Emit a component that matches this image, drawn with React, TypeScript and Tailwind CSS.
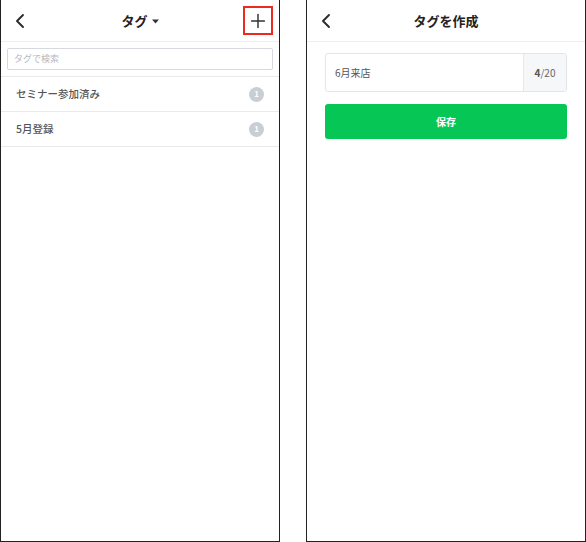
import React from "react";
import { ChevronLeft, Plus } from "lucide-react";

const font = { fontFamily: '"Noto Sans CJK JP", "Noto Sans", sans-serif' };

function Caret() {
  return (
    <svg width="7" height="5" viewBox="0 0 7 5" className="ml-[4px] mt-[1px]">
      <path d="M0 0.5h7L3.5 4.5z" fill="#333" />
    </svg>
  );
}

function Badge() {
  return (
    <div className="w-[15px] h-[15px] rounded-full bg-[#c9cdd4] flex items-center justify-center text-white text-[8px] font-bold leading-none">
      1
    </div>
  );
}

function LeftPanel() {
  const rows = ["セミナー参加済み", "5月登録"];
  return (
    <div className="w-[280px] h-[542px] border-x border-b border-[#222] bg-white flex flex-col">
      <div className="h-[42px] border-b border-[#eceef1] grid grid-cols-[1fr_auto_1fr] items-center">
        <div className="pl-[7px] flex items-center">
          <ChevronLeft size={24} strokeWidth={1.9} color="#2b2b2b" />
        </div>
        <div className="flex items-center text-[13px] font-bold text-[#222] leading-none">
          タグ
          <Caret />
        </div>
        <div className="flex justify-end pr-[6px]">
          <div className="w-[30px] h-[29px] border-2 border-[#ec2b20] flex items-center justify-center">
            <Plus size={22} strokeWidth={1.6} color="#333" />
          </div>
        </div>
      </div>
      <div className="pt-[6px] pb-[6px] px-[6px] border-b border-[#e8eaee]">
        <div className="h-[22px] border border-[#d6dae0] rounded-[2px] flex items-center px-[6px] text-[9px] text-[#b4b9c1]">
          タグで検索
        </div>
      </div>
      {rows.map((r) => (
        <div
          key={r}
          className="h-[35px] border-b border-[#e8eaee] flex items-center justify-between pl-[15px] pr-[15px]"
        >
          <span className="text-[10.5px] font-medium text-[#555]">{r}</span>
          <Badge />
        </div>
      ))}
    </div>
  );
}

function RightPanel() {
  return (
    <div className="w-[280px] h-[542px] border-x border-b border-[#222] bg-white flex flex-col">
      <div className="h-[42px] border-b border-[#eceef1] grid grid-cols-[1fr_auto_1fr] items-center">
        <div className="pl-[7px] flex items-center">
          <ChevronLeft size={24} strokeWidth={1.9} color="#2b2b2b" />
        </div>
        <div className="text-[13px] font-bold text-[#222] leading-none">タグを作成</div>
        <div />
      </div>
      <div className="px-[18px] pt-[11px] flex flex-col gap-[12px]">
        <div className="h-[39px] border border-[#e2e5ea] rounded-[3px] flex overflow-hidden">
          <div className="flex-1 flex items-center pl-[9px] text-[10px] text-[#555]">6月来店</div>
          <div className="w-[43px] bg-[#f6f7f9] border-l border-[#e6e8ec] flex items-center justify-center text-[10px] text-[#666]">
            <span className="font-bold text-[#555]">4</span>/20
          </div>
        </div>
        <div className="h-[35px] rounded-[3px] bg-[#06c755] flex items-center justify-center text-white text-[10px] font-bold">
          保存
        </div>
      </div>
    </div>
  );
}

export default function App() {
  return (
    <div className="w-[586px] h-[542px] bg-white flex gap-[26px]" style={font}>
      <LeftPanel />
      <RightPanel />
    </div>
  );
}
